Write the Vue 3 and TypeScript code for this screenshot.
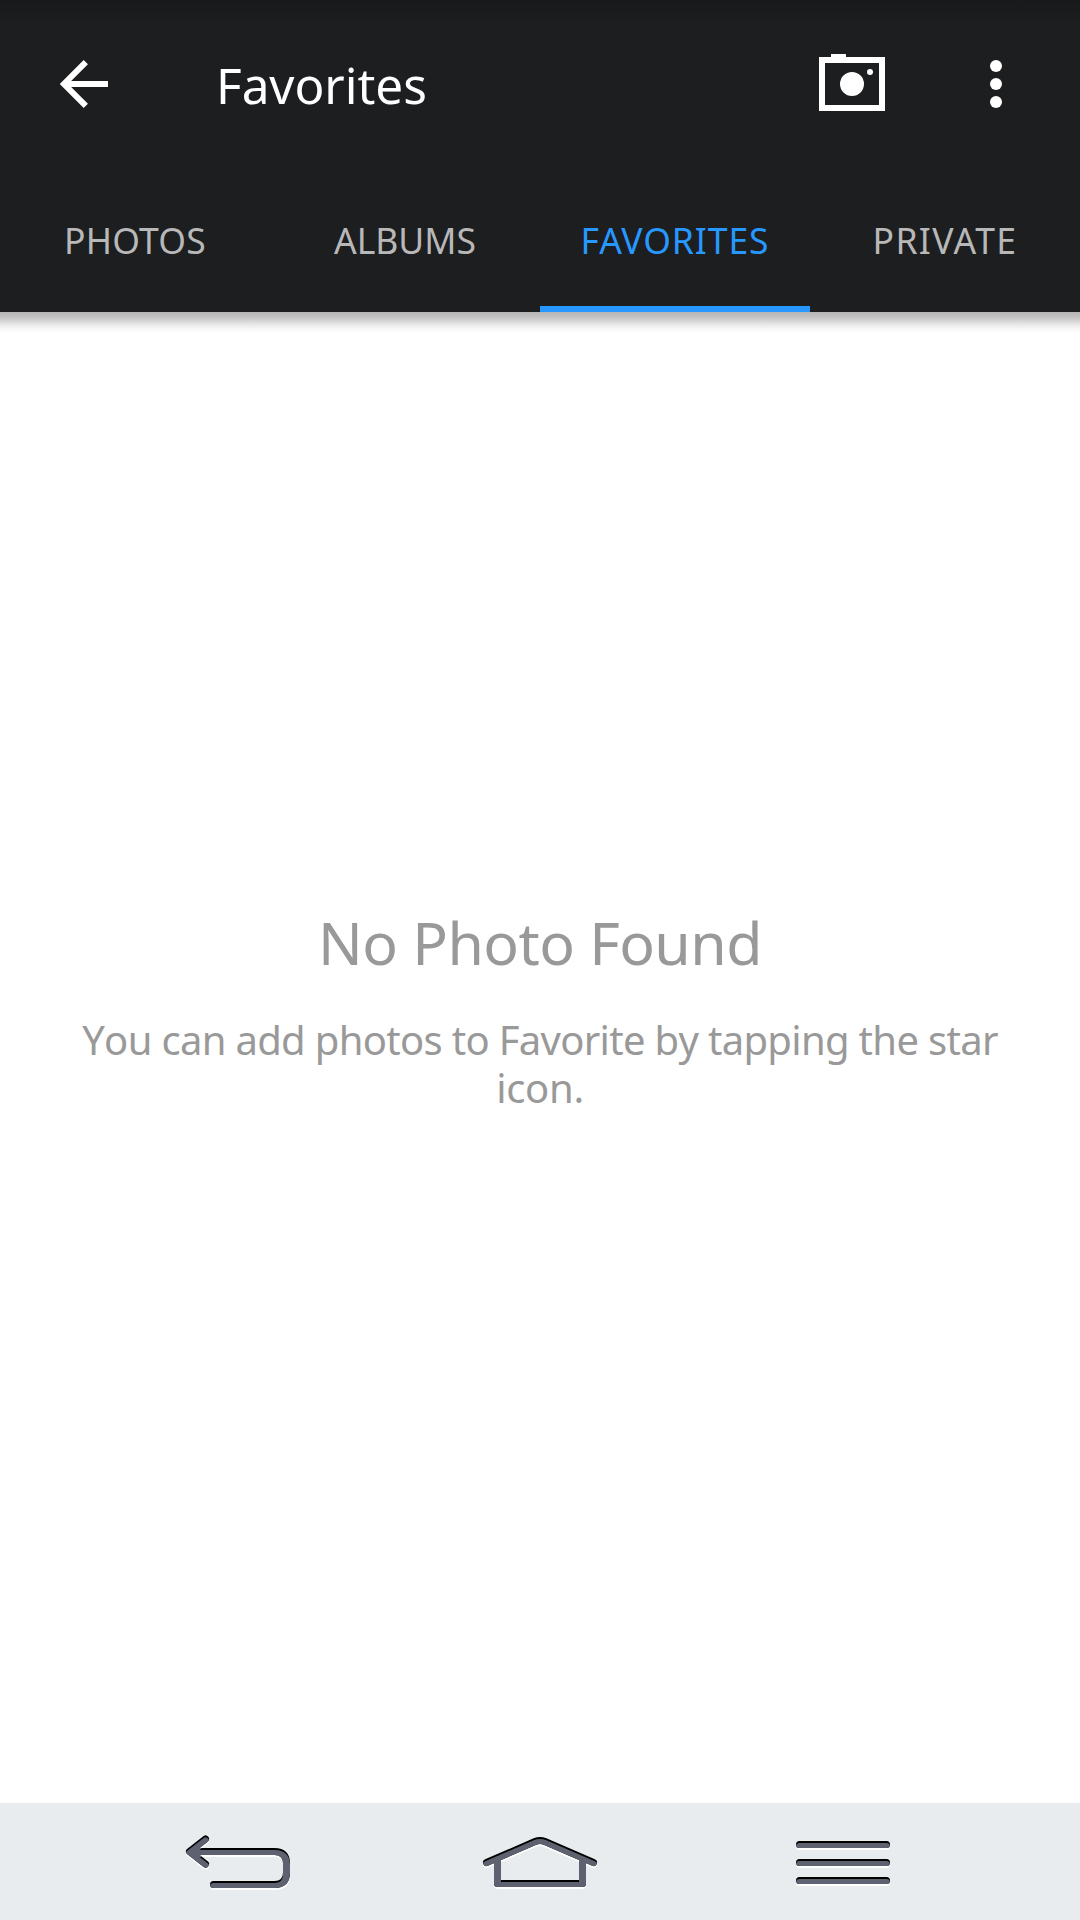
<script setup lang="ts">
interface Tab {
  id: string
  label: string
}

const tabs: Tab[] = [
  { id: 'photos', label: 'PHOTOS' },
  { id: 'albums', label: 'ALBUMS' },
  { id: 'favorites', label: 'FAVORITES' },
  { id: 'private', label: 'PRIVATE' },
]
const activeTab = 'favorites'
const navIcons: string[] = ['back', 'home', 'menu']
</script>

<template>
  <div class="screen">
    <header class="header">
      <div class="toolbar">
        <svg class="back" width="48" height="48" viewBox="0 0 48 48">
          <path d="M25.8 2.2 4 24l21.800 21.800M4 24h44" fill="none" stroke="#fff" stroke-width="6" />
        </svg>
        <h1 class="title">Favorites</h1>
        <svg class="camera" width="66" height="57" viewBox="0 0 66 57" fill="#fff">
          <path d="M12 0h15v3h39v54H0V3h12zM6 9v42h54V9z" fill-rule="evenodd" />
          <circle cx="33" cy="30" r="12" />
          <circle cx="51" cy="18" r="3" />
        </svg>
        <svg class="more" width="12" height="48" viewBox="0 0 12 48" fill="#fff">
          <circle cx="6" cy="6" r="6" />
          <circle cx="6" cy="24" r="6" />
          <circle cx="6" cy="42" r="6" />
        </svg>
      </div>
      <nav class="tabs">
        <div v-for="tab in tabs" :key="tab.id" class="tab" :class="[tab.id, { active: tab.id === activeTab }]">
          <span>{{ tab.label }}</span>
        </div>
      </nav>
    </header>

    <main class="content">
      <h2 class="empty-title">No Photo Found</h2>
      <p class="empty-text">
        <span class="line">You can add photos to Favorite by tapping the star</span>
        <span class="line last">icon.</span>
      </p>
    </main>

    <footer class="navbar">
      <svg width="1080" height="117" viewBox="0 0 1080 117">
        <defs>
          <g id="nav-back" fill="none" stroke-width="7" stroke-linecap="round" stroke-linejoin="round">
            <path d="M205.500 36 189.500 48.500l16 12.500" />
            <path d="M191 48.500h83.500q12 0 12 12v9q0 12-12 12H213.500" />
          </g>
          <g id="nav-home" fill="none" stroke-width="7" stroke-linecap="round" stroke-linejoin="round">
            <path d="M486.500 59.500 535 38.500q5-2 10 0l48.500 21" />
            <path d="M497.500 57v23.500h85V57" stroke-linecap="butt" />
          </g>
          <g id="nav-menu" fill="none" stroke-width="7" stroke-linecap="round">
            <path d="M799.500 41.500h87M799.500 59.500h87M799.500 77.500h87" />
          </g>
          <mask
            v-for="name in navIcons"
            :id="'mask-' + name"
            :key="name"
            maskUnits="userSpaceOnUse"
            x="0"
            y="0"
            width="1080"
            height="117"
          >
            <use :href="'#nav-' + name" stroke="#fff" />
          </mask>
        </defs>
        <g v-for="name in navIcons" :key="name">
          <use :href="'#nav-' + name" y="2" stroke="#fff" />
          <use :href="'#nav-' + name" stroke="#000" />
          <g :mask="'url(#mask-' + name + ')'">
            <use :href="'#nav-' + name" y="2" stroke="#5e6270" />
          </g>
        </g>
      </svg>
    </footer>
  </div>
</template>

<style>
body {
  margin: 0;
}
</style>

<style scoped>
.screen {
  width: 1080px;
  height: 1920px;
  display: flex;
  flex-direction: column;
  background: #fff;
  font-family: "Noto Sans", sans-serif;
  overflow: hidden;
}
.header {
  height: 312px;
  flex: none;
  background: linear-gradient(#18191b 0, #1d1e20 28px);
}
.toolbar {
  height: 168px;
  display: flex;
  align-items: center;
  box-sizing: border-box;
  padding-left: 60px;
  padding-right: 78px;
}
.title {
  margin: 1px 0 0 108px;
  font-size: 49.500px;
  line-height: 60px;
  font-weight: 400;
  color: #fff;
  letter-spacing: -0.050px;
}
.camera {
  margin: 0 105px 3px auto;
}
.tabs {
  height: 144px;
  display: flex;
}
.tab {
  flex: 1;
  box-sizing: border-box;
  height: 144px;
  display: flex;
  justify-content: center;
  align-items: center;
  font-size: 35.500px;
  line-height: 48px;
  color: #b8b8b8;
}
.photos {
  letter-spacing: 0.200px;
}
.albums {
  letter-spacing: 0;
}
.favorites {
  letter-spacing: 0.900px;
}
.private {
  letter-spacing: 1.400px;
}
.tab.active {
  color: #2798ff;
  border-bottom: 6px solid #2798ff;
  padding-top: 6px;
}
.content {
  flex: 1;
  display: flex;
  flex-direction: column;
  background: linear-gradient(#b5b5b5 0, #c6c6c6 6px, #e6e6e6 12px, #f8f8f8 17px, #fff 22px);
  color: #999;
  text-align: center;
}
.empty-title {
  margin: 590px 0 0;
  font-size: 59px;
  line-height: 80px;
  font-weight: 400;
  letter-spacing: -0.550px;
}
.empty-text {
  margin: 34px 0 0;
  font-size: 40px;
  line-height: 48px;
}
.line {
  display: block;
  white-space: nowrap;
  letter-spacing: -0.680px;
  font-kerning: none;
}
.line.last {
  letter-spacing: -0.300px;
}
.navbar {
  height: 117px;
  flex: none;
  background: #e8ecef;
}
.navbar svg {
  display: block;
}
</style>
